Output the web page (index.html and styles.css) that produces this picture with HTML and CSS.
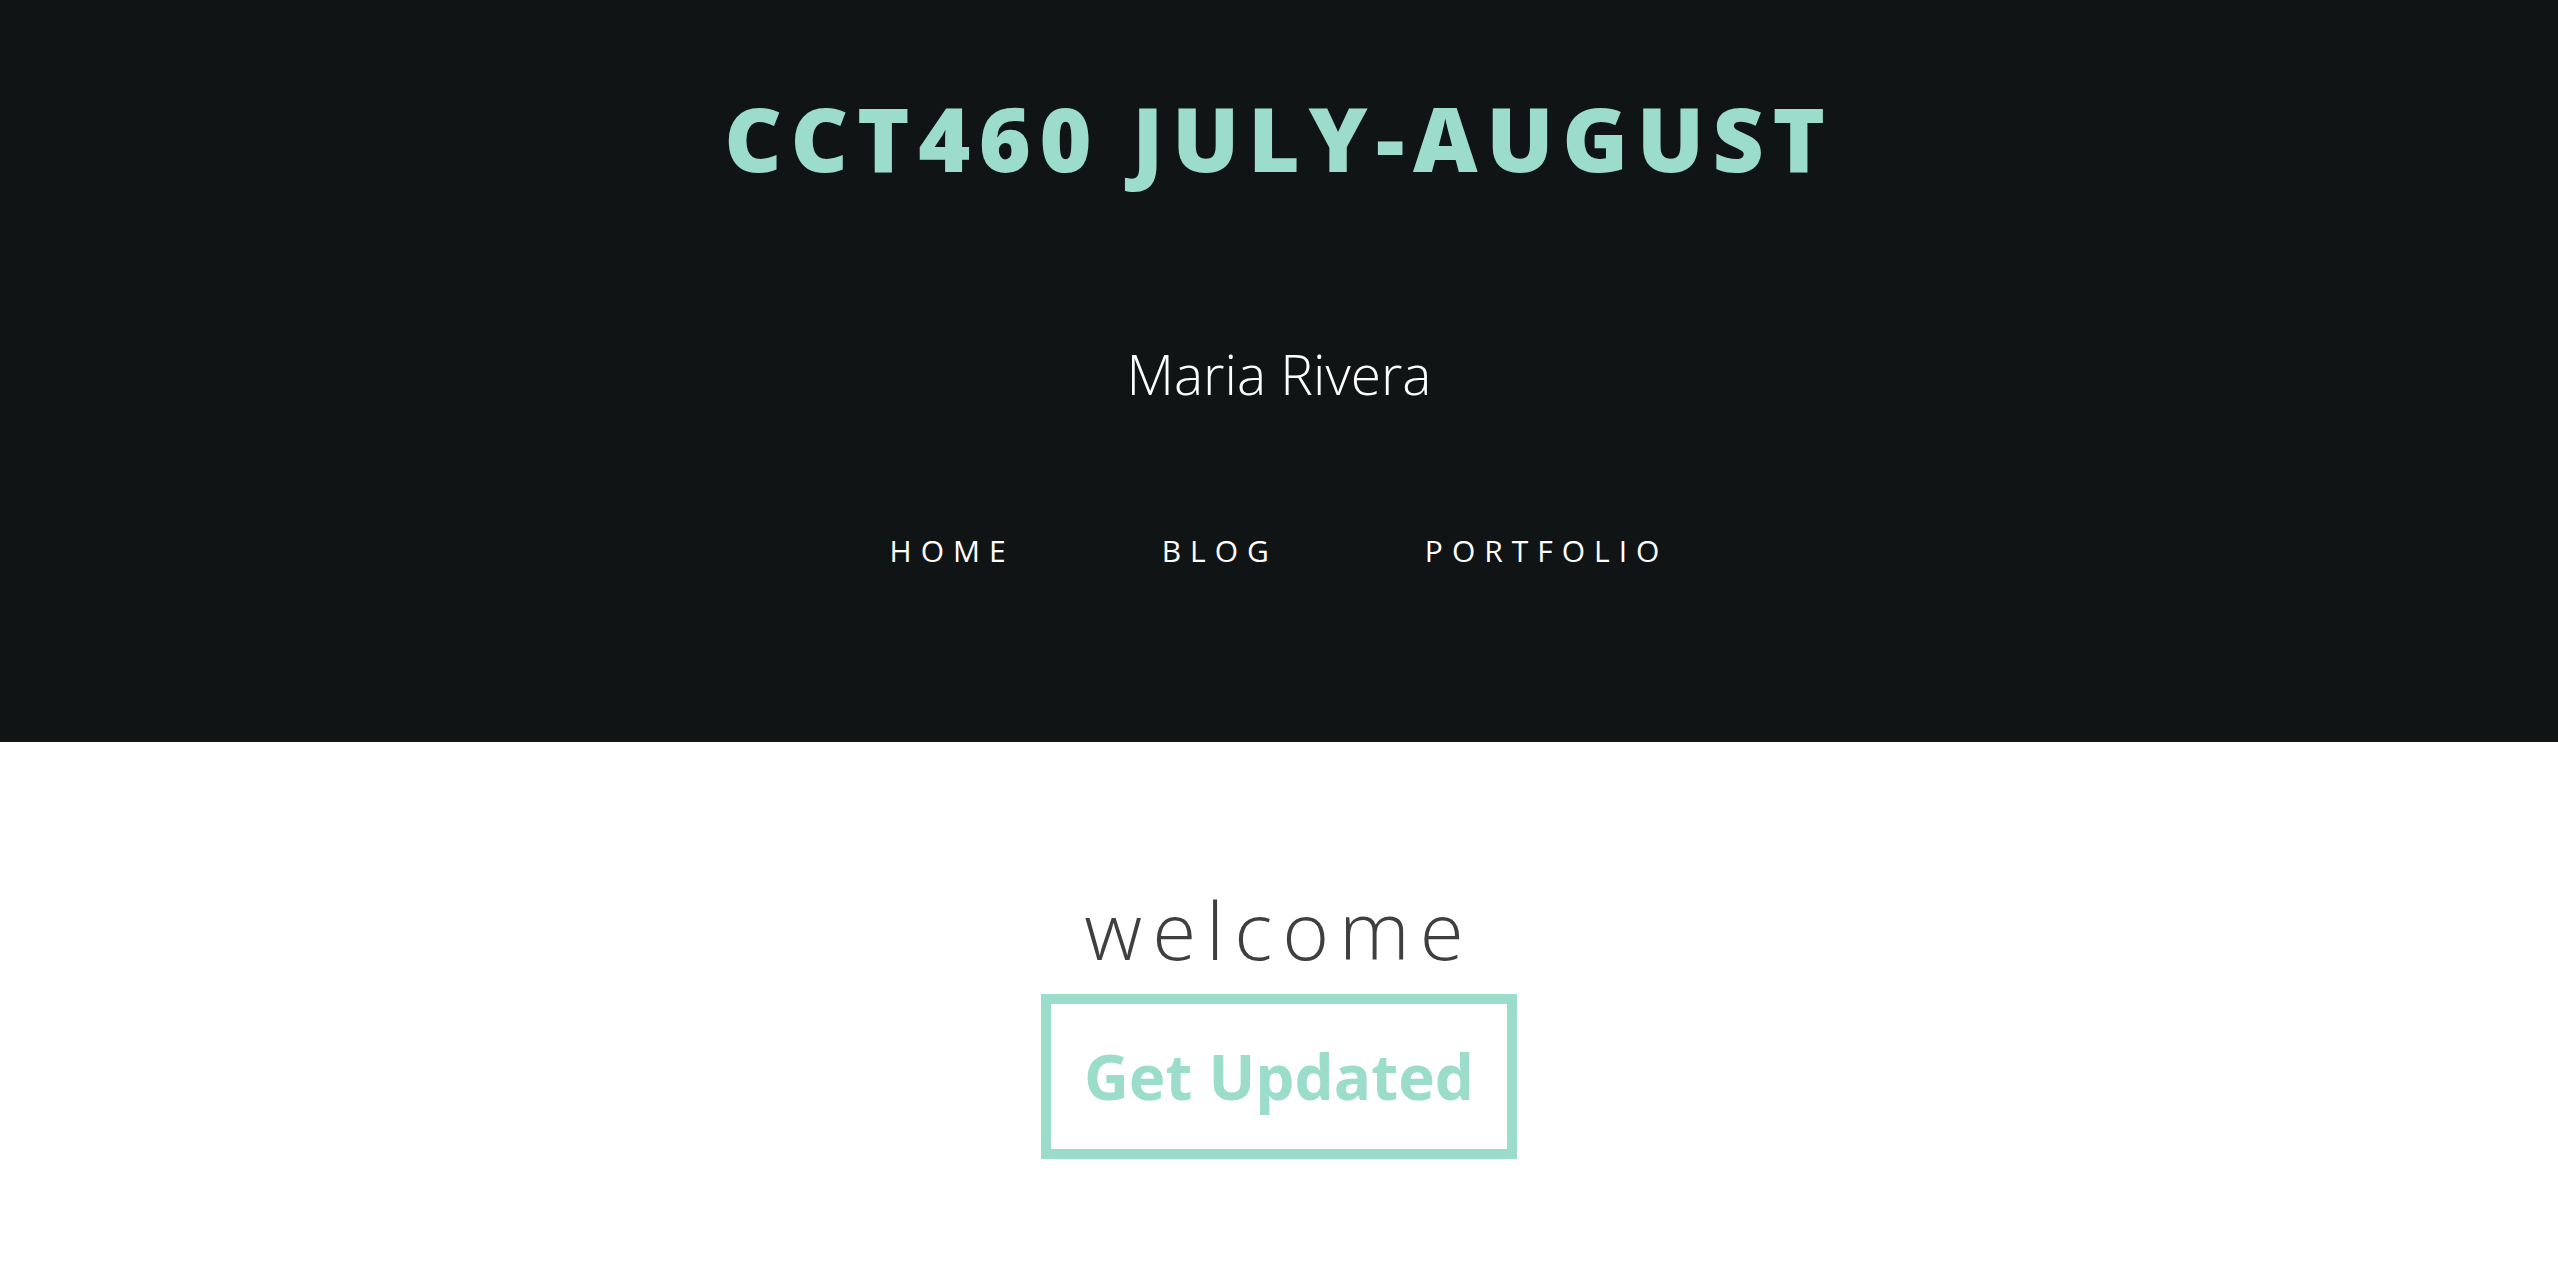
FILE: index.html
```html
<!DOCTYPE html>
<html lang="en">
<head>
<meta charset="utf-8">
<title>CCT460 July-August</title>
<link rel="stylesheet" href="styles.css">
</head>
<body>
<header class="site-header">
  <h1 class="site-title">CCT460 JULY-AUGUST</h1>
  <p class="site-author">Maria Rivera</p>
  <nav class="site-nav">
    <a class="nav-link" href="#">HOME</a>
    <a class="nav-link" href="#">BLOG</a>
    <a class="nav-link" href="#">PORTFOLIO</a>
  </nav>
</header>
<main class="intro">
  <h2 class="welcome">welcome</h2>
  <a class="cta" href="#">Get Updated</a>
</main>
</body>
</html>
```
FILE: styles.css
```css
html, body {
  margin: 0;
  padding: 0;
  background: #ffffff;
  font-family: "Open Sans", "Liberation Sans", sans-serif;
}

.site-header {
  background: #111415;
  text-align: center;
  padding: 93px 0 176px;
  display: flex;
  flex-direction: column;
  align-items: center;
}

.site-title {
  margin: 0;
  font-size: 89px;
  line-height: 90px;
  font-weight: 800;
  letter-spacing: 8.6px;
  color: #9bdcca;
}

.site-author {
  margin: 163px 0 0;
  font-size: 55px;
  line-height: 56px;
  font-weight: 300;
  color: #ffffff;
}

.site-nav {
  margin-top: 134px;
  display: flex;
  justify-content: center;
  gap: 147px;
}

.nav-link {
  font-size: 30px;
  line-height: 30px;
  font-weight: 400;
  letter-spacing: 0.3em;
  color: #ffffff;
  text-decoration: none;
}

.intro {
  display: flex;
  flex-direction: column;
  align-items: center;
  padding-top: 147px;
}

.welcome {
  margin: 0;
  font-size: 80px;
  line-height: 80px;
  font-weight: 300;
  letter-spacing: 10px;
  color: #3f3f3f;
}

.cta {
  margin-top: 25px;
  display: inline-block;
  border: 10px solid #9bdcca;
  padding: 41px 33px 42px;
  font-size: 62px;
  line-height: 62px;
  font-weight: 700;
  color: #9bdcca;
  text-decoration: none;
}
```
